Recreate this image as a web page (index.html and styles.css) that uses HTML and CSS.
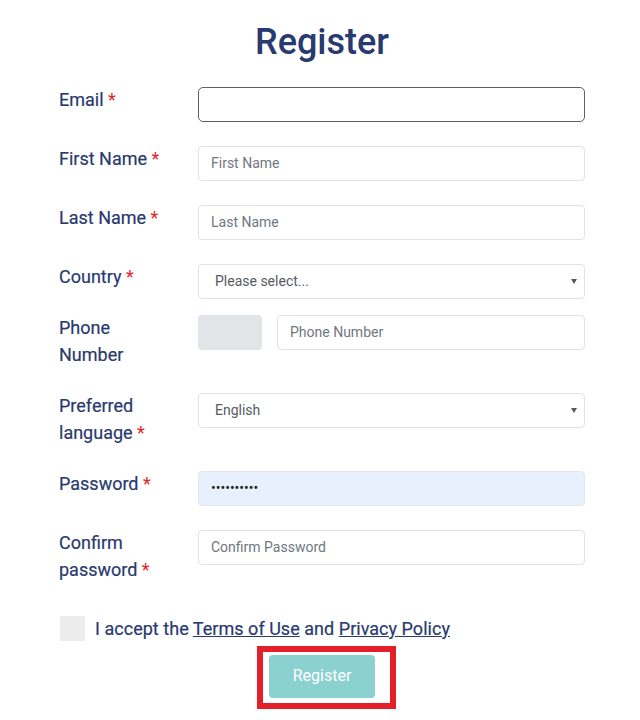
FILE: index.html
```html
<!DOCTYPE html>
<html lang="en">
<head>
<meta charset="utf-8">
<title>Register</title>
<link rel="stylesheet" href="styles.css">
</head>
<body>
<form class="form">
  <h1 class="title">Register</h1>

  <div class="row">
    <label class="label">Email <span class="req">*</span></label>
    <input class="field field-focus" type="text">
  </div>

  <div class="row">
    <label class="label">First Name <span class="req">*</span></label>
    <input class="field" type="text" placeholder="First Name">
  </div>

  <div class="row">
    <label class="label">Last Name <span class="req">*</span></label>
    <input class="field" type="text" placeholder="Last Name">
  </div>

  <div class="row row-tight">
    <label class="label">Country <span class="req">*</span></label>
    <div class="field select"><span>Please select...</span><svg class="caret" width="6" height="5" viewBox="0 0 6 5"><path d="M0 0H6L3 5Z"/></svg></div>
  </div>

  <div class="row">
    <label class="label">Phone<br>Number</label>
    <div class="phone">
      <div class="prefix"></div>
      <input class="field" type="text" placeholder="Phone Number">
    </div>
  </div>

  <div class="row">
    <label class="label">Preferred<br>language <span class="req">*</span></label>
    <div class="field select"><span>English</span><svg class="caret" width="6" height="5" viewBox="0 0 6 5"><path d="M0 0H6L3 5Z"/></svg></div>
  </div>

  <div class="row">
    <label class="label">Password <span class="req">*</span></label>
    <input class="field field-auto" type="password" value="abcdefghij">
  </div>

  <div class="row row-last">
    <label class="label">Confirm<br>password <span class="req">*</span></label>
    <input class="field" type="password" placeholder="Confirm Password">
  </div>

  <div class="accept">
    <span class="check"></span>
    <span class="accept-text">I accept the <a href="#">Terms of Use</a> and <a href="#">Privacy Policy</a></span>
  </div>

  <div class="submit-wrap">
    <div class="highlight">
      <button class="submit" type="button">Register</button>
    </div>
  </div>
</form>
</body>
</html>
```

FILE: styles.css
```css
* { box-sizing: border-box; }

html, body {
  margin: 0;
  padding: 0;
  background: #ffffff;
}

body {
  font-family: Roboto, "Liberation Sans", Arial, sans-serif;
  color: #283a6e;
}

.form {
  width: 526px;
  margin-left: 59px;
  padding-top: 20px;
}

.title {
  margin: 0 0 23px 0;
  font-size: 36px;
  line-height: 44px;
  font-weight: 500;
  text-align: center;
  color: #283a6e;
}

.row {
  display: flex;
  align-items: flex-start;
  margin-bottom: 24px;
}

.row-tight { margin-bottom: 16px; }
.row-last { margin-bottom: 32px; }

.label {
  width: 139px;
  flex: none;
  margin-top: -1px;
  margin-bottom: 1px;
  font-size: 18px;
  line-height: 27px;
  font-weight: 400;
  color: #283a6e;
  -webkit-text-stroke: 0.2px #283a6e;
}

.req { color: #e3242b; -webkit-text-stroke: 0; }

.field {
  flex: 1;
  min-width: 0;
  height: 35px;
  border: 1px solid #e3e3e3;
  border-radius: 4px;
  background: #fff;
  padding: 0 12px 2px 12px;
  font-family: Roboto, "Liberation Sans", Arial, sans-serif;
  font-size: 14px;
  color: #495057;
  outline: none;
}

.field::placeholder { color: #707780; }

.field-focus {
  border: 1px solid #5f6062;
  border-radius: 5px;
}

.field-auto {
  background: #e8f0fe;
  border-color: #e2e7ef;
  color: #222;
}

.select {
  display: flex;
  align-items: center;
  justify-content: space-between;
  padding: 0 7px 2px 16px;
  color: #555b62;
}

.caret {
  display: block;
  fill: #555a60;
  margin-top: 2px;
}

.phone {
  flex: 1;
  display: flex;
  gap: 15px;
}

.prefix {
  width: 64px;
  height: 35px;
  border-radius: 4px;
  background: #e2e5e8;
  flex: none;
}

.accept {
  display: flex;
  align-items: center;
  gap: 10px;
  margin-left: 1px;
}

.check {
  width: 25px;
  height: 25px;
  background: #ececec;
  flex: none;
}

.accept-text {
  font-size: 18px;
  line-height: 25px;
  color: #283a6e;
  letter-spacing: 0.03px;
  -webkit-text-stroke: 0.2px #283a6e;
}

.accept-text a {
  color: #283a6e;
  text-decoration: underline;
}

.submit-wrap {
  display: flex;
  justify-content: center;
  margin-top: 5px;
  padding-left: 9px;
}

.highlight {
  border: 6px solid #e3202a;
  padding: 3px 15px 5px 6px;
}

.submit {
  display: block;
  width: 106px;
  height: 43px;
  border: none;
  border-radius: 4px;
  background: #8bd1cf;
  color: #ffffff;
  font-family: Roboto, "Liberation Sans", Arial, sans-serif;
  font-size: 16px;
  padding: 0 0 2px 0;
}
```
